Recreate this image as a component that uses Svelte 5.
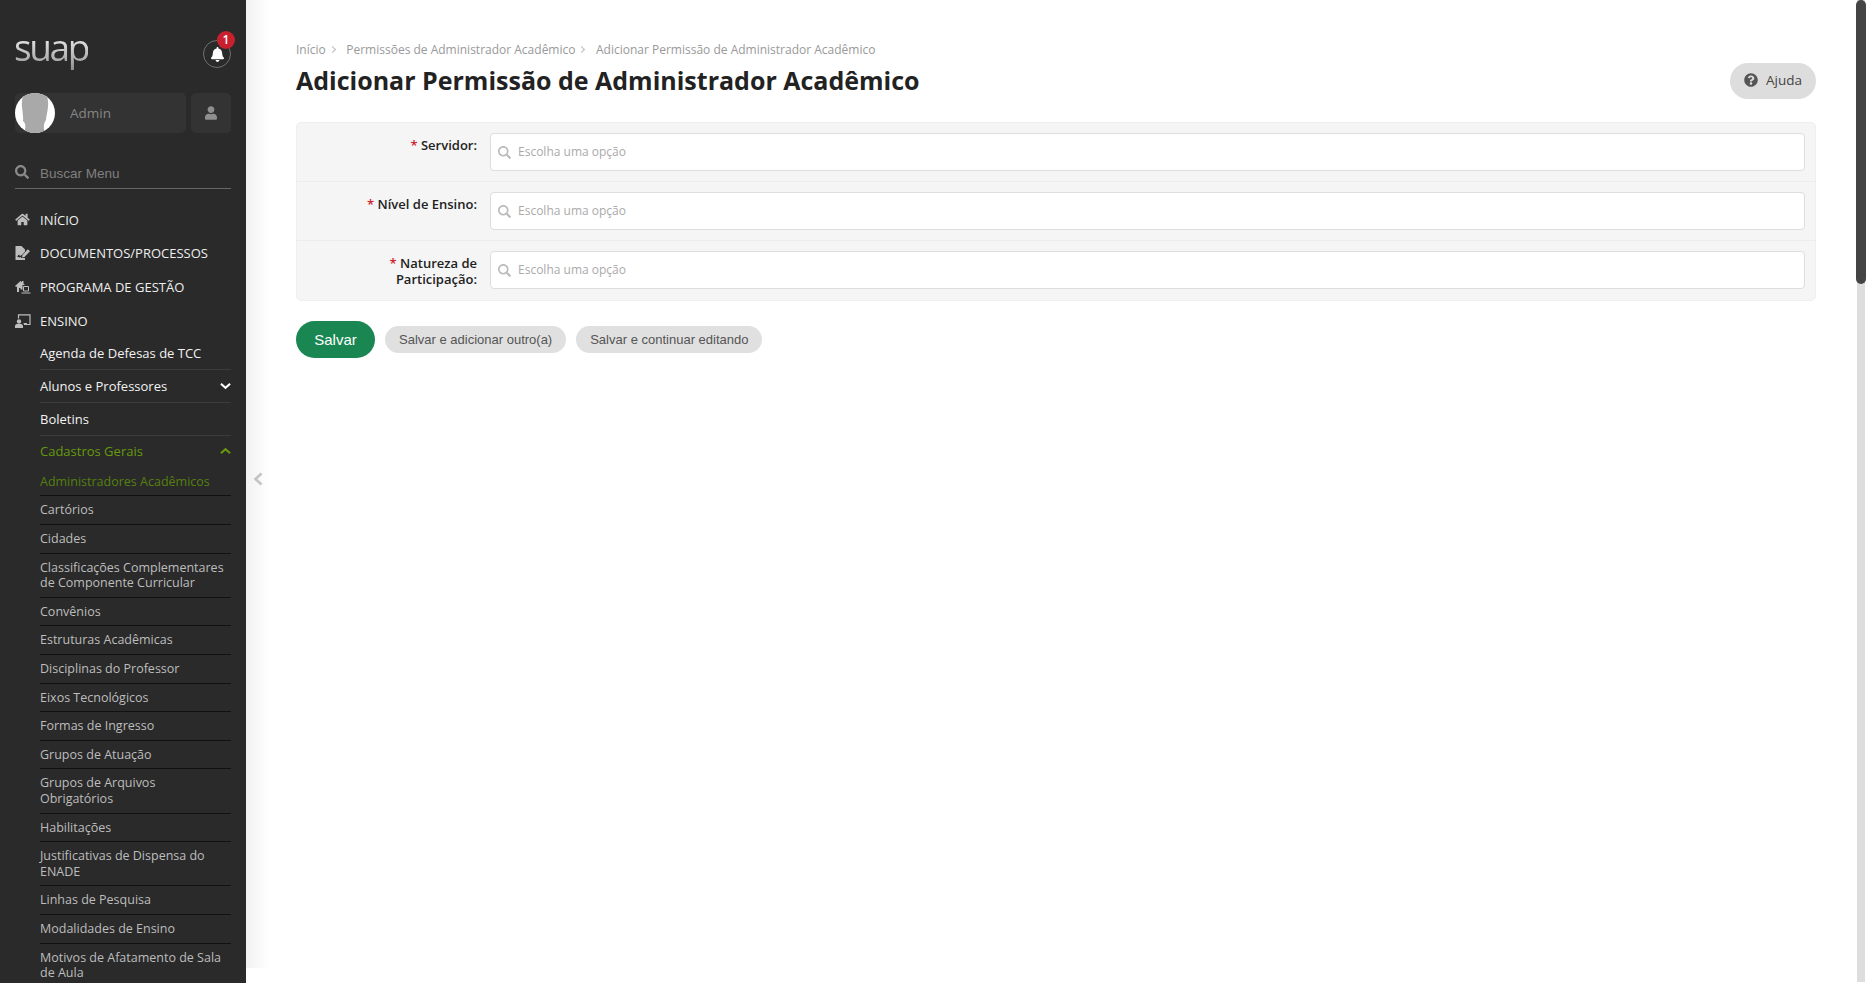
<script>
  const topMenu = [
    { label: 'INÍCIO', icon: 'home' },
    { label: 'DOCUMENTOS/PROCESSOS', icon: 'doc' },
    { label: 'PROGRAMA DE GESTÃO', icon: 'laptop' },
    { label: 'ENSINO', icon: 'board' }
  ];
  const cadastros = [
    'Cartórios', 'Cidades', 'Classificações Complementares de Componente Curricular',
    'Convênios', 'Estruturas Acadêmicas', 'Disciplinas do Professor', 'Eixos Tecnológicos',
    'Formas de Ingresso', 'Grupos de Atuação', 'Grupos de Arquivos Obrigatórios',
    'Habilitações', 'Justificativas de Dispensa do ENADE', 'Linhas de Pesquisa',
    'Modalidades de Ensino', 'Motivos de Afatamento de Sala de Aula'
  ];
  const fields = [
    { label: 'Servidor:' },
    { label: 'Nível de Ensino:' },
    { label: 'Natureza de Participação:' }
  ];
  const searchPath = 'M505 442.7L405.3 343c-4.5-4.5-10.6-7-17-7H372c27.6-35.3 44-79.7 44-128C416 93.1 322.9 0 208 0S0 93.1 0 208s93.1 208 208 208c48.3 0 92.7-16.4 128-44v16.3c0 6.4 2.5 12.5 7 17l99.7 99.7c9.4 9.4 24.6 9.4 33.9 0l28.3-28.3c9.4-9.4 9.4-24.6.1-34zM208 336c-70.7 0-128-57.2-128-128 0-70.7 57.2-128 128-128 70.7 0 128 57.2 128 128 0 70.7-57.2 128-128 128z';
</script>

<div class="page">
  <nav class="sidebar">
    <div class="brand">
      <span class="logo">suap</span>
      <button class="bell" aria-label="Notificações">
        <svg viewBox="0 0 448 512" width="13" height="15"><path fill="#fff" d="M224 512c35.32 0 63.97-28.65 63.97-64H160.03c0 35.35 28.65 64 63.97 64zm215.39-149.71c-19.32-20.76-55.47-51.99-55.47-154.29 0-77.7-54.48-139.9-127.94-155.16V32c0-17.67-14.32-32-31.98-32s-31.98 14.33-31.98 32v20.84C118.56 68.1 64.08 130.3 64.08 208c0 102.3-36.15 133.53-55.47 154.29-6 6.45-8.66 14.16-8.61 21.71.11 16.4 12.98 32 32.1 32h383.8c19.12 0 32-15.6 32.1-32 .05-7.55-2.61-15.27-8.61-21.71z"/></svg>
        <span class="badge">1</span>
      </button>
    </div>

    <div class="user">
      <div class="user-pill">
        <svg class="avatar" viewBox="0 0 40 40" width="40" height="40">
          <defs><clipPath id="avatar-clip"><circle cx="20" cy="20" r="20"/></clipPath></defs>
          <circle cx="20" cy="20" r="20" fill="#fff"/>
          <path clip-path="url(#avatar-clip)" fill="#a9a9a9" d="M10 0 C17 -0.5 24 -0.5 30 0 C33 4 33.5 9 33 14 C32.5 19 31 24 31 27 C29.5 29 28.5 32 29 36 L29 40 L10 40 L10 36 C11 32 10 30 8 28 C8.500 24 7.500 19 7 14 C6.500 9 7 4 10 0Z"/>
        </svg>
        <span class="user-name">Admin</span>
      </div>
      <button class="user-btn" aria-label="Perfil">
        <svg viewBox="0 0 448 512" width="12" height="14"><path fill="#8f8f8f" d="M224 256c70.7 0 128-57.3 128-128S294.7 0 224 0 96 57.3 96 128s57.3 128 128 128zm89.6 32h-16.7c-22.2 10.2-46.9 16-72.9 16s-50.6-5.8-72.9-16h-16.7C60.2 288 0 348.2 0 422.4V464c0 26.5 21.5 48 48 48h352c26.5 0 48-21.5 48-48v-41.6c0-74.2-60.2-134.4-134.4-134.4z"/></svg>
      </button>
    </div>

    <div class="menu-search">
      <svg viewBox="0 0 512 512" width="14" height="14"><path fill="#8a8a8a" d={searchPath}/></svg>
      <span>Buscar Menu</span>
    </div>

    <ul class="top-menu">
      {#each topMenu as item}
        <li>
          <span class="top-icon">
            {#if item.icon === 'home'}
              <svg viewBox="0 0 576 512" width="15" height="13"><path fill="#bdbdbd" d="M280.37 148.26L96 300.11V464a16 16 0 0 0 16 16l112.06-.29a16 16 0 0 0 15.92-16V368a16 16 0 0 1 16-16h64a16 16 0 0 1 16 16v95.64a16 16 0 0 0 16 16.05L464 480a16 16 0 0 0 16-16V300L295.67 148.26a12.19 12.19 0 0 0-15.3 0zM571.6 251.47L488 182.56V44.05a12 12 0 0 0-12-12h-56a12 12 0 0 0-12 12v72.61L318.47 43a48 48 0 0 0-61 0L4.34 251.47a12 12 0 0 0-1.6 16.9l25.5 31A12 12 0 0 0 45.15 301l235.22-193.74a12.19 12.19 0 0 1 15.3 0L530.9 301a12 12 0 0 0 16.9-1.6l25.5-31a12 12 0 0 0-1.7-16.93z"/></svg>
            {:else if item.icon === 'doc'}
              <svg viewBox="0 0 16 14" width="16" height="14">
                <path fill="#bdbdbd" d="M0.5 0H6.5L10 3.5V5.5L6.5 9.5 6 12H10V14H0.5Z"/>
                <path fill="#2a2a2a" d="M2 10.5 L4 8.5 L5 10 L7 9 L7 10.5 L4.5 11.5 Z"/>
                <path fill="#bdbdbd" d="M7.5 9 L12.8 3.2 L15 5.2 L9.5 11 L7 11.5 Z"/>
              </svg>
            {:else if item.icon === 'laptop'}
              <svg viewBox="0 0 16 14" width="16" height="14">
                <path fill="#bdbdbd" d="M0 6 L5.5 1 L7 2.3 V1 H8.5 V3.7 L10 5 H7.5 V9.5 H5.5 V8 H4 V12 H2 V6.8 H0.8Z"/>
                <path fill="none" stroke="#bdbdbd" stroke-width="1" d="M8.5 6.5 H13.5 V11 H8.5 Z"/>
                <path fill="none" stroke="#bdbdbd" stroke-width="1" d="M6.5 13 H15.5"/>
              </svg>
            {:else}
              <svg viewBox="0 0 16 14" width="16" height="14">
                <path fill="none" stroke="#bdbdbd" stroke-width="1.2" d="M3.5 4.5 V0.8 H15 V10.5 H9"/>
                <path fill="#bdbdbd" d="M8.5 9 H12 V10 H8.5Z"/>
                <circle cx="4" cy="7.5" r="2.2" fill="#bdbdbd"/>
                <path fill="#bdbdbd" d="M0 14 V12 C0 10.5 1.5 10 2.5 10 H5.5 C6.5 10 8 10.5 8 12 V14Z"/>
              </svg>
            {/if}
          </span>
          {item.label}
        </li>
      {/each}
    </ul>

    <ul class="second-menu">
      <li><span>Agenda de Defesas de TCC</span></li>
      <li>
        <span>Alunos e Professores</span>
        <svg viewBox="0 0 12 8" width="11" height="8"><polyline points="1,1.5 6,6 11,1.5" fill="none" stroke="#fff" stroke-width="2.2"/></svg>
      </li>
      <li><span>Boletins</span></li>
      <li class="open">
        <span>Cadastros Gerais</span>
        <svg viewBox="0 0 12 8" width="11" height="8"><polyline points="1,6.5 6,2 11,6.5" fill="none" stroke="#669a0c" stroke-width="2.2"/></svg>
      </li>
    </ul>

    <ul class="third-menu">
      <li class="current">Administradores Acadêmicos</li>
      {#each cadastros as name}
        <li>{name}</li>
      {/each}
    </ul>
  </nav>

  <div class="toggle-strip">
    <svg viewBox="0 0 10 14" width="10" height="14"><polyline points="8.5,1.5 2.5,7 8.5,12.5" fill="none" stroke="#c4c4c4" stroke-width="2.6"/></svg>
  </div>

  <main class="content">
    <ol class="breadcrumb">
      <li>Início</li>
      <li>Permissões de Administrador Acadêmico</li>
      <li>Adicionar Permissão de Administrador Acadêmico</li>
    </ol>

    <header class="title-row">
      <h1>Adicionar Permissão de Administrador Acadêmico</h1>
      <button class="help">
        <svg viewBox="0 0 512 512" width="14" height="14"><path fill="#555" d="M504 256c0 136.997-111.043 248-248 248S8 392.997 8 256C8 119.083 119.043 8 256 8s248 111.083 248 248zM262.655 90c-54.497 0-89.255 22.957-116.549 63.758-3.536 5.286-2.353 12.415 2.715 16.258l34.699 26.31c5.205 3.947 12.621 3.008 16.665-2.122 17.864-22.658 30.113-35.797 57.303-35.797 20.429 0 45.698 13.148 45.698 32.958 0 14.976-12.363 22.667-32.534 33.976C247.128 238.528 216 254.941 216 296v4c0 6.627 5.373 12 12 12h56c6.627 0 12-5.373 12-12v-1.333c0-28.462 83.186-29.647 83.186-106.667 0-58.002-60.165-102-116.531-102zM256 338c-25.365 0-46 20.635-46 46 0 25.364 20.635 46 46 46s46-20.636 46-46c0-25.365-20.635-46-46-46z"/></svg>
        Ajuda
      </button>
    </header>

    <form class="form-box">
      {#each fields as field}
        <div class="form-row">
          <div class="label-cell">
            <span class="field-label"><span class="req">*</span> {field.label}</span>
          </div>
          <div class="select">
            <svg viewBox="0 0 512 512" width="13" height="13"><path fill="#bbb" d="M505 442.7L405.3 343c-4.5-4.5-10.6-7-17-7H372c27.6-35.3 44-79.7 44-128C416 93.1 322.9 0 208 0S0 93.1 0 208s93.1 208 208 208c48.3 0 92.7-16.4 128-44v16.3c0 6.4 2.5 12.5 7 17l99.7 99.7c9.4 9.4 24.6 9.4 33.9 0l28.3-28.3c9.4-9.4 9.4-24.6.1-34zM208 352c-79.5 0-144-64.5-144-144S128.5 64 208 64s144 64.5 144 144-64.5 144-144 144z"/></svg>
            <span class="placeholder">Escolha uma opção</span>
          </div>
        </div>
      {/each}
    </form>

    <div class="actions">
      <button class="primary">Salvar</button>
      <button class="secondary">Salvar e adicionar outro(a)</button>
      <button class="secondary">Salvar e continuar editando</button>
    </div>
  </main>

  <div class="scrollbar"><div class="thumb"></div></div>
</div>

<style>
  :global(body) {
    margin: 0;
    background: #fff;
    font-family: "Open Sans", sans-serif;
  }
  ul, ol { list-style: none; margin: 0; padding: 0; }
  button { font: inherit; border: 0; cursor: pointer; }

  .page {
    display: flex;
    height: 983px;
    overflow: hidden;
  }

  .sidebar {
    width: 246px;
    flex: none;
    box-sizing: border-box;
    padding: 0 15px;
    background: #2a2a2a;
    overflow: hidden;
  }

  .brand {
    display: flex;
    justify-content: space-between;
    height: 93px;
    box-sizing: border-box;
    padding-top: 25px;
  }
  .logo {
    margin-left: -1px;
    font: 400 37px/44px "Open Sans", sans-serif;
    letter-spacing: -2.4px;
    background: linear-gradient(#e4e4e4 30%, #8f8f8f 95%);
    -webkit-background-clip: text;
    background-clip: text;
    color: transparent;
    height: 48px;
  }
  .bell {
    position: relative;
    width: 28px;
    height: 28px;
    margin-top: 15px;
    padding: 0;
    box-sizing: border-box;
    border: 1px solid #707070;
    border-radius: 50%;
    background: transparent;
    display: flex;
    align-items: center;
    justify-content: center;
  }
  .badge {
    position: absolute;
    top: -10px;
    right: -5px;
    width: 18px;
    height: 18px;
    border-radius: 50%;
    background: #c8202f;
    color: #fff;
    font: 600 12px/18px "Open Sans", sans-serif;
    text-align: center;
  }

  .user {
    display: flex;
    gap: 5px;
    height: 40px;
  }
  .user-pill {
    flex: 1;
    display: flex;
    align-items: center;
    gap: 15px;
    border-radius: 5px;
    background: #333;
  }
  .avatar { flex: none; }
  .user-name { font-size: 13.5px; color: #868686; }
  .user-btn {
    width: 40px;
    padding: 0;
    border-radius: 5px;
    background: #333;
    display: flex;
    align-items: center;
    justify-content: center;
  }

  .menu-search {
    display: flex;
    align-items: center;
    gap: 11px;
    height: 56px;
    box-sizing: border-box;
    margin-bottom: 14px;
    padding-top: 25px;
    border-bottom: 1px solid #666;
    font: 13.5px "Liberation Sans", Arial, sans-serif;
    color: #808080;
  }
  .menu-search svg { margin-top: -3px; }

  .top-menu li {
    display: flex;
    align-items: center;
    height: 33.6px;
    font-size: 13px;
    color: #eee;
  }
  .top-icon {
    width: 25px;
    flex: none;
    display: flex;
    align-items: center;
  }

  .second-menu { margin-left: 25px; }
  .second-menu li {
    display: flex;
    align-items: center;
    justify-content: space-between;
    height: 33px;
    box-sizing: border-box;
    border-bottom: 1px solid #3c3c3c;
    font-size: 13px;
    color: #f2f2f2;
  }
  .second-menu li.open { border-bottom: 0; color: #669a0c; height: 32px; padding-bottom: 2px; }

  .third-menu { margin-left: 25px; }
  .third-menu li {
    padding: 6px 0;
    border-bottom: 1px solid #111;
    font-size: 12.5px;
    line-height: 15.6px;
    color: #bdbdbd;
  }
  .third-menu li.current { color: #55800f; padding-bottom: 5.5px; }

  .toggle-strip {
    width: 24px;
    height: 968px;
    flex: none;
    background: linear-gradient(to right, #f2f2f2, #fff);
    display: flex;
    align-items: center;
    padding-left: 7px;
    box-sizing: border-box;
    padding-bottom: 10px;
  }

  .content {
    flex: 1;
    min-width: 0;
    box-sizing: border-box;
    padding: 41px 40px 0 26px;
  }

  .breadcrumb {
    display: flex;
    gap: 20.5px;
    font-size: 12px;
    line-height: 17px;
    color: #999;
  }
  .breadcrumb li { position: relative; }
  .breadcrumb li:not(:last-child)::after {
    content: "";
    position: absolute;
    right: -9px;
    top: 6px;
    width: 4px;
    height: 4px;
    border-top: 1.5px solid #bbb;
    border-right: 1.5px solid #bbb;
    transform: rotate(45deg);
  }

  .title-row {
    display: flex;
    justify-content: space-between;
    align-items: center;
    height: 36px;
    margin: 5px 0 23px;
  }
  h1 {
    margin: 0 0 2px;
    font-size: 25px;
    line-height: 34px;
    font-weight: 700;
    color: #222;
  }
  .help {
    width: 86px;
    height: 36px;
    padding: 0 0 2px;
    border-radius: 18px;
    background: #ddd;
    color: #444;
    font-size: 13.5px;
    display: flex;
    align-items: center;
    justify-content: center;
    gap: 8px;
  }

  .form-box {
    display: block;
    box-sizing: border-box;
    border: 1px solid #eee;
    border-radius: 5px;
    background: #f5f5f5;
  }
  .form-row {
    display: flex;
    gap: 13px;
    box-sizing: border-box;
    height: 59px;
    padding: 10px 10px 0 0;
    border-bottom: 1px solid #ececec;
  }
  .form-row:last-child { border-bottom: 0; }
  .label-cell {
    width: 180px;
    flex: none;
    box-sizing: border-box;
    padding: 4px 0 0 32px;
    text-align: right;
    font-size: 13px;
    line-height: 16px;
    font-weight: 600;
    color: #222;
  }
  .req { color: #d0222f; }
  .select {
    flex: 1;
    height: 38px;
    box-sizing: border-box;
    display: flex;
    align-items: center;
    gap: 7px;
    padding-left: 7px;
    border: 1px solid #ddd;
    border-radius: 4px;
    background: #fff;
    font-size: 12px;
    color: #aaa;
  }
  .placeholder { margin-top: -1px; }

  .actions {
    display: flex;
    align-items: center;
    gap: 10px;
    margin-top: 20px;
    font-family: "Liberation Sans", Arial, sans-serif;
  }
  .primary {
    width: 79px;
    height: 37px;
    border-radius: 19px;
    background: #1a8753;
    color: #fff;
    font-size: 15px;
  }
  .secondary {
    height: 27px;
    padding: 0 14px;
    border-radius: 14px;
    background: #e0e0e0;
    color: #555;
    font-size: 13px;
  }

  .scrollbar {
    width: 10px;
    height: 982px;
    flex: none;
    background: linear-gradient(to right, #fff 1px, #ddd 1px, #ddd 9px, #fff 9px);
  }
  .thumb {
    height: 284px;
    border-radius: 5px;
    background: #444;
  }
</style>
